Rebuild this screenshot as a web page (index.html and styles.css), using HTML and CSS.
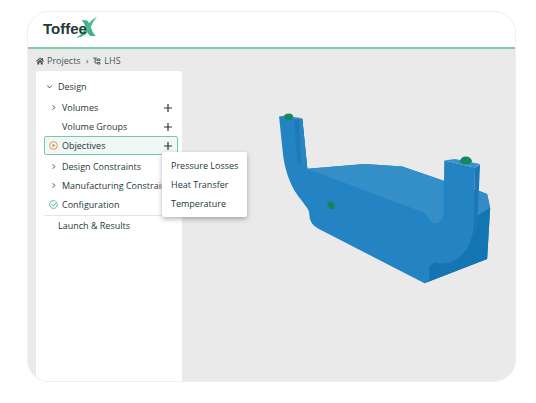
FILE: index.html
```html
<!DOCTYPE html>
<html lang="en">
<head>
  <meta charset="UTF-8">
  <meta name="viewport" content="width=device-width, initial-scale=1.0">
  <title>ToffeeX</title>
  <link rel="stylesheet" href="styles.css">
</head>
<body>
  <div class="app">
    <header class="topbar">
      <a class="logo" href="#" aria-label="ToffeeX">
        <span class="logo-text">Toffee</span>
        <svg class="logo-x" viewBox="0 0 20 20">
          <path d="M5 3h5c2 1 2.500 3 4 6.500 1.500 4 2.500 6.500 5 8.500h-5c-2.500-1-3.500-4-4.500-7C8.500 7.500 7.500 4.500 5 3z" fill="#3fb489"/>
          <path d="M20 0c-5 2-8 6-10.500 10C7 14.500 4 17.500 0 20c7-.5 11-4 13.500-9C15.500 6 17 3 20 0z" fill="#4dba90"/>
        </svg>
      </a>
    </header>

    <nav class="breadcrumb">
      <a href="#">
        <svg class="crumb-icon" viewBox="0 0 16 16"><path d="M8 1L0 8l1.500 1.500L8 4l6.500 5.500L16 8l-2-1.800V2h-2.500v2zM8 5.500L2.500 10v5h4v-4h3v4h4v-5z" fill="#4a5557"/></svg>
        Projects
      </a>
      <span class="crumb-sep">›</span>
      <a href="#">
        <svg class="crumb-icon" viewBox="0 0 16 16"><path d="M0 2h8M4 2v10h5M4 6h5" fill="none" stroke="#4a5557" stroke-width="1.800"/><path d="M9 4h5v3H9zM9 11h5v3H9z" fill="none" stroke="#4a5557" stroke-width="1.800"/></svg>
        LHS
      </a>
    </nav>

    <main class="workspace">
      <aside class="sidebar">
        <div class="row row-top">
          <svg class="icon" viewBox="0 0 10 10"><path d="M2.500 4L5 6.500 7.500 4"/></svg>
          <span class="label">Design</span>
        </div>

        <div class="row">
          <svg class="icon" viewBox="0 0 10 10"><path d="M4 2.500L6.500 5 4 7.500"/></svg>
          <span class="label">Volumes</span>
          <button class="add" aria-label="Add volume"><svg viewBox="0 0 10 10"><path d="M5 1v8M1 5h8"/></svg></button>
        </div>
        <div class="row">
          <span class="icon"></span>
          <span class="label">Volume Groups</span>
          <button class="add" aria-label="Add volume group"><svg viewBox="0 0 10 10"><path d="M5 1v8M1 5h8"/></svg></button>
        </div>
        <div class="row row-active">
          <svg class="icon icon-todo" viewBox="0 0 10 10"><circle cx="5" cy="5" r="4.300"/><circle class="dot" cx="5" cy="5" r="1.400"/></svg>
          <span class="label">Objectives</span>
          <button class="add" aria-label="Add objective"><svg viewBox="0 0 10 10"><path d="M5 1v8M1 5h8"/></svg></button>
          <div class="menu">
            <button class="menu-item">Pressure Losses</button>
            <button class="menu-item">Heat Transfer</button>
            <button class="menu-item">Temperature</button>
          </div>
        </div>
        <div class="row">
          <svg class="icon" viewBox="0 0 10 10"><path d="M4 2.500L6.500 5 4 7.500"/></svg>
          <span class="label">Design Constraints</span>
        </div>
        <div class="row">
          <svg class="icon" viewBox="0 0 10 10"><path d="M4 2.500L6.500 5 4 7.500"/></svg>
          <span class="label">Manufacturing Constraints</span>
        </div>
        <div class="row">
          <svg class="icon icon-done" viewBox="0 0 10 10"><path d="M9.100 3.800A4.300 4.300 0 1 1 7.300 1.400M3 4.800l1.800 1.800L9 2"/></svg>
          <span class="label">Configuration</span>
        </div>

        <div class="row row-results">
          <span class="icon"></span>
          <span class="label">Launch &amp; Results</span>
        </div>
      </aside>

      <section class="viewer">
        <svg class="model" viewBox="275 105 220 180">
          <!-- body -->
          <path d="M309 168L366 163.500 403 166 444 180 479 190 487 193 490 207 487 257.500 425 281.500 320 227.500Q311 223 311 214 311 209 308 206L303 199Q289 183 285 155L281 116.500 304 118.500z" fill="#2483c2"/>
          <!-- deck -->
          <path d="M309 168L366 163.500 403 166 444 180V215Q442 222 435 222.500C430 222 428 213 423 211L380 195z" fill="#348ec8"/>
          <path d="M478 190L487 193 490 207 477 216z" fill="#348bc6"/>
          <!-- end face -->
          <path d="M490 207L487 257.500 425 281.500 430 278V265Q435 260 442 262C460 261 471 247 474 228L478 214z" fill="#1475b3"/>
          <path d="M430 265Q435 259 440 262L434 266 430 278z" fill="#1c70aa"/>
          <!-- left arm -->
          <path d="M281 116.500L287 115.500 304 118 297 119z" fill="#3b91c9"/>
          <path d="M296 119L304 118.500 309 168 299 163z" fill="#1f7aba"/>
          <path d="M301 119L304 118.500 309 168 303 164z" fill="#2985c4"/>
          <!-- right arm -->
          <path d="M444.500 160L475 167 474 223C471 248 460 261 440 262L420 240 435 222.500Q443 222 444 215z" fill="#2483c2"/>
          <path d="M475 167L480 164 477 228Q473 240 468 245 473 235 474 223z" fill="#1b77b5"/>
          <path d="M444.500 160L455 158.500 480 163.500 475 167z" fill="#3b90ca"/>
          <!-- ports -->
          <path d="M286 117a4.500 3.500 0 0 1 9 0q-1 3-4.500 3t-4.500-3z" fill="#16885d"/>
          <path d="M460 161a6 5 0 0 1 12 0q-1 3-6 3t-6-3z" fill="#16885d"/>
          <path d="M329 201l4-.5 3 3v4l-4 .5-3-3z" fill="#16835f"/>
        </svg>
      </section>
    </main>
  </div>
</body>
</html>
```

FILE: styles.css
```css
* {
  box-sizing: border-box;
}
body {
  margin: 0;
  padding: 11px 20px 21px 27px;
  min-height: 100vh;
  display: flex;
  background: #fff;
  color: #263739;
  font-family: "Open Sans", sans-serif;
  font-size: 9px;
  font-weight: 500;
  line-height: 12px;
}
a {
  color: inherit;
  text-decoration: none;
}
button {
  padding: 0;
  border: none;
  background: none;
  color: inherit;
  font: inherit;
  cursor: pointer;
}
.app {
  flex: 1;
  display: flex;
  flex-direction: column;
  overflow: hidden;
  background: #eaeaea;
  border: 1px solid #edf2ef;
  border-radius: 22px;
}
.topbar {
  height: 37px;
  padding: 5px 15px;
  background: #fff;
  border-bottom: 2px solid #7dcbab;
}
.logo {
  display: flex;
  align-items: flex-start;
}
.logo-text {
  position: relative;
  z-index: 1;
  font-family: "Liberation Sans", sans-serif;
  font-size: 15px;
  font-weight: bold;
  line-height: 23px;
}
.logo-x {
  width: 21px;
  height: 21px;
  margin-left: -11px;
}

/* breadcrumb */
.breadcrumb {
  height: 22px;
  padding: 2px 8px 0;
  display: flex;
  align-items: center;
  gap: 5px;
  color: #4a5557;
}
.breadcrumb a {
  display: flex;
  align-items: center;
  gap: 3px;
}
.crumb-icon {
  width: 8px;
  height: 8px;
}

/* sidebar */
.workspace {
  flex: 1;
  display: flex;
}
.sidebar {
  width: 146px;
  margin-left: 8px;
  padding: 6px 4px 0 8px;
  background: #fff;
  border-radius: 3px 3px 0 0;
}
.row {
  position: relative;
  height: 19px;
  padding: 0 4px;
  display: flex;
  align-items: center;
  gap: 4px;
  border: 1px solid transparent;
  white-space: nowrap;
}
.row-top {
  padding-left: 0;
  margin-bottom: 2px;
}
.row-active {
  margin-bottom: 2px;
  background: #f0f8f5;
  border-color: #7fc5aa;
  border-radius: 2px;
}
.row-results {
  height: 22px;
  padding-left: 0;
  margin-top: 1px;
  border-top-color: #e4e6e5;
}
.icon {
  flex: none;
  width: 9px;
  height: 9px;
  fill: none;
  stroke: #263739;
  stroke-width: 1;
}
.icon-todo {
  stroke: #e08a4a;
}
.icon-todo .dot {
  fill: #e08a4a;
  stroke: none;
}
.icon-done {
  stroke: #3fb58a;
}
.label {
  flex: 1;
}
.add {
  width: 10px;
  height: 10px;
  display: flex;
}
.add svg {
  width: 10px;
  height: 10px;
  stroke: #263739;
  stroke-width: 1.2;
}
.menu {
  position: absolute;
  top: 15px;
  left: 117px;
  z-index: 2;
  padding: 4px 9px;
  background: #fff;
  border-radius: 2px;
  box-shadow: 0 2px 5px rgba(0, 0, 0, 0.3);
}
.menu-item {
  display: block;
  height: 19px;
}

/* 3d view */
.viewer {
  flex: 1;
  padding: 34px 20px 0 0;
  display: flex;
  justify-content: flex-end;
  align-items: flex-start;
}
.model {
  width: 71%;
}
```
